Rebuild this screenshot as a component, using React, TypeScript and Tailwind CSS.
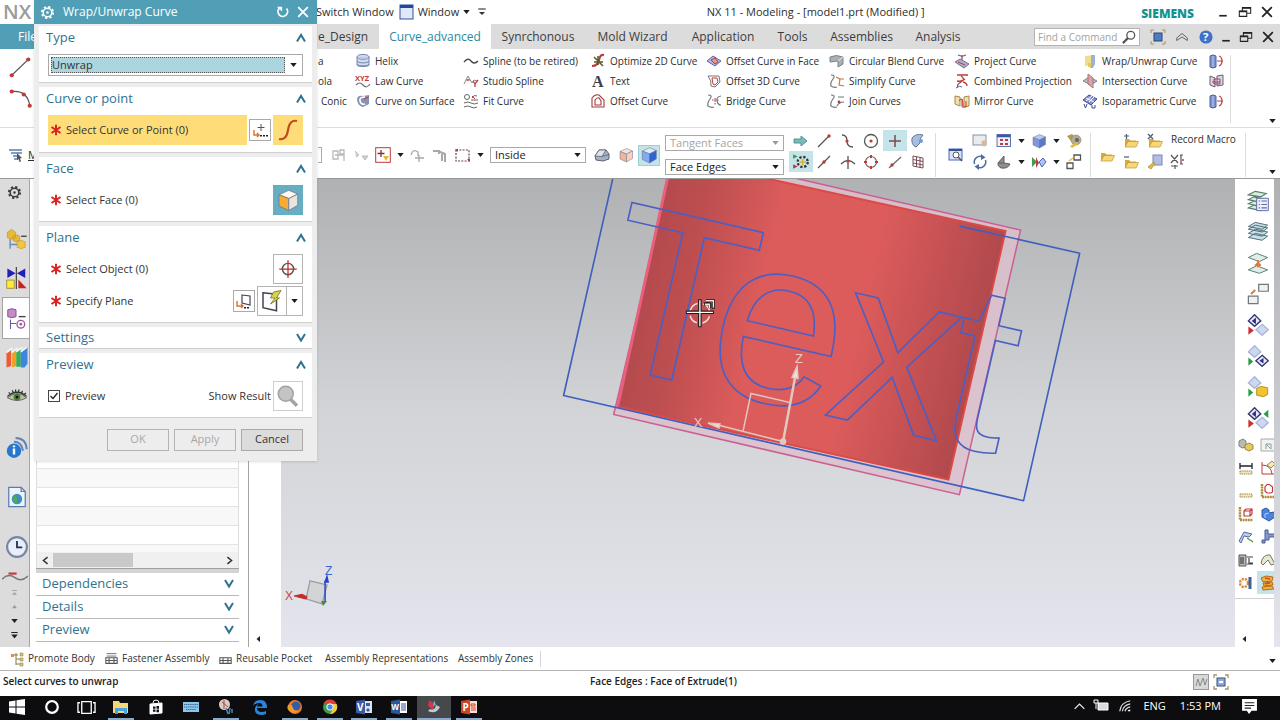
import type { ReactNode } from "react";

type IconProps = { s?: number; children: ReactNode };
const Svg = ({ s = 16, children }: IconProps) => (
  <svg viewBox="0 0 16 16" width={s} height={s} fill="none" aria-hidden="true" className="shrink-0">
    {children}
  </svg>
);

const BLUE = "#4468c0";
const RED = "#c03a3a";
const GREY = "#667079";
const GOLD = "#e8b838";

const Folder = ({ mark }: { mark?: string }) => (
  <Svg>
    <path d="M2 14V6h4l1.500 1.500H13V14z" fill="#d9a93a" />
    <path d="M2 14l3-5.500h10.500L13 14z" fill="#f7d777" stroke="#c29532" strokeWidth=".7" />
    {mark && <path d={mark} stroke="#4a5a78" strokeWidth="1.200" />}
  </Svg>
);
const Cube = ({ l, r, t, s = 16 }: { l: string; r: string; t: string; s?: number }) => (
  <Svg s={s}>
    <path d="M2 4.500l6.500-3 6 2.500-6 3z" fill={t} stroke="#6b7388" strokeWidth=".5" />
    <path d="M2 4.500L8.500 7v8L2 12z" fill={l} stroke="#6b7388" strokeWidth=".5" />
    <path d="M14.500 4L8.500 7v8l6-3.500z" fill={r} stroke="#6b7388" strokeWidth=".5" />
  </Svg>
);
const Caret = ({ faded }: { faded?: boolean }) => (
  <svg viewBox="0 0 8 5" width="7" height="4" aria-hidden="true" className="shrink-0">
    <path d="M0 0h8L4 5z" fill={faded ? "#9a9a9a" : "#1d1d1d"} />
  </svg>
);
const Chevron = ({ down, s = 12 }: { down?: boolean; s?: number }) => (
  <svg viewBox="0 0 12 10" width={s} height={s - 2} fill="none" aria-hidden="true" className="shrink-0">
    <path d={down ? "M2 1l4 6.500L10 1" : "M2 8.500L6 2l4 6.500"} stroke="#2f7290" strokeWidth="2" />
  </svg>
);
const Gear = ({ color, s = 16 }: { color: string; s?: number }) => (
  <Svg s={s}>
    <circle cx="8" cy="8" r="6" stroke={color} strokeWidth="2" strokeDasharray="2.400 2.310" />
    <circle cx="8" cy="8" r="4.600" stroke={color} strokeWidth="1.600" />
    <circle cx="8" cy="8" r="1.300" fill={color} />
  </Svg>
);
const Restore = () => (
  <Svg s={14}>
    <path d="M1.500 7h8.500v6h-8.500zM5 6.500V3h9.500v6.500h-4" stroke="#222" strokeWidth="1.200" />
    <path d="M1.500 7.500h8.500M5 3.500h9.500" stroke="#222" strokeWidth="1.600" />
  </Svg>
);
const Minimize = () => (
  <Svg s={12}>
    <path d="M3 13h10" stroke="#222" strokeWidth="2.200" />
  </Svg>
);
const Close = ({ color = "#222", s = 14 }: { color?: string; s?: number }) => (
  <Svg s={s}>
    <path d="M2.500 2.500l11 11M13.500 2.500l-11 11" stroke={color} strokeWidth="2" />
  </Svg>
);
const Tabletool = ({ tall }: { tall?: boolean }) => (
  <Svg s={13}>
    {tall && <path d="M2 2h12M2 5h12" stroke="#555" />}
    <path d="M1 7h14v7H1zM5 7v7M11 7v7M1 10.500h14" stroke="#555" strokeWidth="1.300" />
  </Svg>
);

const ic = {
  menu: <Svg><path d="M1 3h13M3 6h11M5 9h6M6 12h4" stroke="#5c7fae" strokeWidth="1.600" /><path d="M9 6l5 5-2 .5 1 3-1.500.5-1-3-1.500 1z" fill="#555" /></Svg>,
  helix: <Svg><ellipse cx="8" cy="4" rx="6" ry="2.600" fill="#cfd9ee" stroke="#7186b4" /><path d="M2 4v8c0 2 12 2 12 0V4M2 8c1 2.500 11 2.500 12 0M2 11c1 2.500 11 2.500 12 0" stroke="#7186b4" fill="#a9b8dc" fillOpacity=".5" /></Svg>,
  law: <Svg><text x="0" y="7.500" fontSize="7.500" fontWeight="700" fill={RED} fontFamily="Open Sans, sans-serif">XYZ</text><path d="M1 12q3.500-4 7 0t7-1" stroke={GREY} strokeWidth="1.200" /></Svg>,
  onSurf: <Svg><path d="M2 7q0-5 6-4l6-1v9l-6 3q-5-1-6-7z" fill="#8593b5" /><path d="M10 4q-6 0-5 4t5 3" stroke="#fff" strokeWidth="1.600" /><path d="M9 6l5-2" stroke={RED} /></Svg>,
  spline: <Svg><path d="M1 9q4-5 7-1t7 0" stroke="#444" strokeWidth="1.300" /></Svg>,
  studio: <Svg><path d="M1 11L5 3l4 7 2-3 3 1" stroke="#888" /><path d="M3.500 7h3M10 8l2 3 3-4M12 11v3" stroke={RED} strokeWidth="1.300" /></Svg>,
  fit: <Svg><circle cx="4" cy="4" r="2.500" stroke="#666" /><path d="M9 5q2-4 5-2M8 7h7M1 10q4-2 7 0t7 0M1 14q4-2 7 0t6 0" stroke="#666" /><path d="M9 3l3 3" stroke={RED} /></Svg>,
  optimize: <Svg><path d="M2 13q6 0 7-6t5-5" stroke={RED} strokeWidth="2.200" /><path d="M4 4l9 9M8 3v9M4 9h9" stroke="#5c5930" strokeWidth="1.500" /></Svg>,
  text: <Svg><text x="2" y="14" fontSize="16" fontWeight="700" fill="#3c4048" fontFamily="Liberation Serif, serif">A</text></Svg>,
  offset: <Svg><path d="M2 14V5q3-4 7-3l5 5v7zM5 12V7q2-3 4-2l2 3v4z" stroke="#a33b3b" strokeWidth="1.100" /></Svg>,
  offFace: <Svg><path d="M1 8l6-5 8 5-6 5z" fill="#b3b6e0" stroke="#6165a8" /><path d="M5 7l4-2 3 4-3 2z" fill="#e39a8c" stroke={RED} /></Svg>,
  off3d: <Svg><path d="M2 3h11l1 6-5 5-4-1q1-5-3-10z" stroke="#777" /><path d="M6 5h5l1 4-3 3-2-1z" stroke={RED} /></Svg>,
  bridge: <Svg><path d="M2 2q5 0 2 4T2 13q3 2 6 1M15 3q-5 1-4 5t4 4" stroke="#6c7a78" strokeWidth="1.200" /><path d="M6 7h7M9 5v7" stroke={RED} strokeDasharray="1.500 1" /></Svg>,
  blend: <Svg><path d="M1 4q6-3 13 0v7l-5 3V8L1 9z" fill="#a9b0b2" stroke="#7b8488" /><path d="M9 8l5-4" stroke="#e8ecec" /></Svg>,
  simplify: <Svg><path d="M2 2q5 0 2 4T2 13q3 2 6 1" stroke="#6c7a78" strokeWidth="1.200" /><path d="M7 4l4 2-1 6 5 1M10 6h5" stroke="#c5793d" strokeWidth="1.200" /></Svg>,
  join: <Svg><path d="M2 2q5 0 2 4T2 13q3 2 6 1M9 4h6M8 13q2-4 7-4" stroke="#6c7a78" strokeWidth="1.200" /><circle cx="10" cy="9" r="1.400" fill={RED} /></Svg>,
  project: <Svg><path d="M4 2q4 2 8 0" stroke={BLUE} strokeWidth="1.300" /><path d="M8 3v7" stroke={RED} strokeWidth="1.300" /><path d="M1 9l5-3 9 5-5 4z" fill="#a9aecb" stroke="#7076a3" /><path d="M4 9l7 3" stroke={RED} /></Svg>,
  combined: <Svg><path d="M3 2h11M7 3q5 3 0 6t-3 5M11 6q-3 3-8 2M9 9q4 1 4 4" stroke={RED} strokeWidth="1.300" /><path d="M2 15q4-3 6-1" stroke={BLUE} /></Svg>,
  mirror: <Svg><path d="M1 3l5 1v9l-5-2zM10 4l5-1v10l-5 1z" fill="#efdfb6" stroke="#a98944" /><path d="M5 8q4-6 4 5M8 6v8h4V8" stroke={RED} /></Svg>,
  wrap: <Svg><path d="M3 3l9-1v10l-9 1z" fill="#f0de8c" /><path d="M9 2h4v9l-2 4H8l1-4z" fill="#9fb1d0" /><path d="M6 10h3v4H6z" fill="#e6c957" /></Svg>,
  intersect: <Svg><path d="M1 8l6-4 8 4-6 4z" fill="#b9bcc6" stroke="#80838f" /><path d="M6 1l5 4v10l-5-4z" fill="#d8a3a3" fillOpacity=".8" stroke="#b07070" /></Svg>,
  iso: <Svg><path d="M1 7l6-5 8 4-6 6z" fill="#8793d0" stroke="#3b4a9a" /><path d="M4 5l8 4M7 9l5-5M4 8l6-5" stroke="#fff" /><path d="M2 11l1.500 4L5 11M10 12v3h3v-3" stroke="#3b4a9a" /></Svg>,
  extract: <Svg><path d="M2 3q3-2 6 0v11q-3 2-6 0z" fill="#7d94cf" stroke="#4d62a3" /><path d="M5 3v11" stroke="#b8c6ee" /><path d="M9 8h6M11 3q3 1 3 5t-3 5" stroke={RED} strokeWidth="1.200" /></Svg>,
  section: <Svg><path d="M2 3l5 2v9l-5-2zM9 3l6-1v10l-6 1z" fill="#dcd7e0" stroke="#666" /><path d="M4 9h8M6 6h6v5H6z" stroke="#a3407a" /></Svg>,
  ghostA: <Svg><path d="M2 4h5v8H2zM9 3h4v4H9zM4 8h9v6" stroke="#b9b9b9" strokeWidth="1.300" /></Svg>,
  ghostB: <Svg><path d="M2 4l4 4-3 2M9 9h6l-3 4z" stroke="#bdbdbd" fill="#cfcfcf" /></Svg>,
  filter: <Svg><rect x=".7" y=".7" width="14.600" height="14.600" stroke={RED} /><path d="M6 3v7M2.500 6.500h7" stroke="#7b3434" strokeWidth="1.300" /><path d="M8 9h6l-3 5z" fill={GOLD} /></Svg>,
  ghostC: <Svg><path d="M2 8q2-7 7-3v4M6 11h9M10 8v7" stroke="#a8a8a8" strokeWidth="1.300" /></Svg>,
  ghostD: <Svg><path d="M1 4h6v3M6 4l7 3v8M10 7v7" stroke="#a8a8a8" strokeWidth="2" /></Svg>,
  marquee: <Svg><rect x="1" y="3" width="13" height="11" stroke="#6b4444" strokeWidth="1.200" strokeDasharray="2 1.300" /><path d="M0 2h3v3M12 12h3v3" fill={RED} /></Svg>,
  shell: <Svg><path d="M1 9l4-6h7l3 4v5l-6 2-7-1z" fill="#a8b1c2" stroke="#5c6372" /><path d="M1 9l4-6h7l-4 6.500z" fill="#dfe3ea" stroke="#5c6372" strokeWidth=".8" /><path d="M8 9.500l7-2" stroke="#5c6372" strokeWidth=".8" /></Svg>,
  cubeOrange: <Cube t="#f3e3dc" l="#efb49c" r="#f8d0bb" />,
  cubeBlue: <Cube t="#dfeaff" l="#7facf0" r="#2f64cf" s={18} />,
  arrowR: <Svg><path d="M1 6h7V3l6 5-6 5v-3H1z" fill="#75bdbb" stroke="#5a8f96" /></Svg>,
  lineEnd: <Svg><path d="M2 14L13 3" stroke="#555" strokeWidth="1.200" /><circle cx="13" cy="3" r="1.700" fill={RED} /></Svg>,
  lineMid: <Svg><path d="M2 14L14 2" stroke="#555" strokeWidth="1.200" /><circle cx="8" cy="8" r="1.700" fill={RED} /></Svg>,
  curveS: <Svg><path d="M2 2q5 0 5 6t6 6" stroke="#555" strokeWidth="1.300" /><circle cx="7" cy="8" r="1.600" fill={RED} /></Svg>,
  centre: <Svg><circle cx="8" cy="8" r="6.500" stroke="#555" strokeWidth="1.300" /><circle cx="8" cy="8" r="1.600" fill={RED} /></Svg>,
  plus: <Svg><path d="M8 2v12M2 8h12" stroke="#7c4a4a" strokeWidth="1.500" /></Svg>,
  face: <Svg><path d="M2 5q4-5 11-3-4 4-3 8l-4 4q-5-2-4-9z" fill="#a8bddf" stroke="#65799d" /><circle cx="11" cy="8" r="2" fill="#7a98d0" /></Svg>,
  snap: <Svg s={18}><path d="M1 1l4 2-4 2z" fill="#3b9c56" /><path d="M1 10l4 2-4 2z" fill={RED} /><circle cx="9.500" cy="8" r="4.500" stroke="#333" strokeWidth="2" strokeDasharray="2 1.530" /><path d="M9.500 5v6M6.500 8h6" stroke="#d5b52d" strokeWidth="1.500" /></Svg>,
  cross: <Svg><path d="M8 2v13M1 10q7-7 14 0" stroke="#555" strokeWidth="1.300" /><circle cx="8" cy="7" r="1.500" fill={RED} /></Svg>,
  quad: <Svg><circle cx="8" cy="8" r="5.500" stroke="#775555" strokeWidth="1.200" /><path d="M7 1h2v3H7zM7 12h2v3H7zM1 7h3v2H1zM12 7h3v2h-3z" fill={RED} /></Svg>,
  tang: <Svg><path d="M2 14L14 3" stroke="#666" strokeWidth="1.200" /><circle cx="5" cy="11" r="1.700" fill={RED} /></Svg>,
  grid: <Svg><path d="M3 2l10 2v10L3 12zM6.500 3v10M10 4v10M3 5.500l10 2M3 9l10 2" stroke="#7a4d57" /></Svg>,
  fitView: <Svg><rect x="1" y="2" width="13" height="11" fill="#d8e3f5" stroke={BLUE} /><path d="M1 3h13" stroke="#39518f" strokeWidth="2" /><circle cx="8" cy="8" r="3" fill="#fff" stroke="#555" /><path d="M10 10l4 4" stroke="#555" strokeWidth="1.500" /></Svg>,
  pan: <Svg><rect x="1" y="2" width="13" height="10" fill="#e8ebf0" stroke="#8991a0" /><path d="M9 9l3-2 3 3-3 4z" fill="#e0b58f" /></Svg>,
  layout: <Svg><rect x="1" y="1.500" width="13.500" height="12" fill="#f0f2fb" stroke="#6074ae" /><path d="M1 3h13" stroke="#3d55a5" strokeWidth="2.500" /><path d="M4 6h3v2H4zM9 6h3v2H9zM4 10h3v2H4zM9 10h3v2H9z" fill={RED} /></Svg>,
  shaded: <Cube t="#b7c8f2" l="#7f98dc" r="#5c78c6" />,
  palette: <Svg><path d="M1 3l5-2 3 3-4 4z" fill="#b79a48" /><circle cx="10" cy="7" r="5" fill="#b3aa8c" stroke="#8d8468" strokeWidth=".6" /><path d="M4 13l7-4 1 2-6 4z" fill={GOLD} /><circle cx="11" cy="7" r="2" fill="#56628a" /></Svg>,
  rotate: <Svg><path d="M2.600 10A5.800 5.800 0 0 1 11 3.100M13.400 6A5.800 5.800 0 0 1 5 12.900" stroke="#536ca0" strokeWidth="1.500" /><path d="M9 0l4.500 3.500L9 6zM7 10l-4.500 2.500L7 16z" fill="#536ca0" /></Svg>,
  disc: <Svg><path d="M2 9l6-7v7l6 1q-2 5-9 4-4-2-3-5z" fill="#8b8f92" stroke="#5d6063" /><path d="M8 9H2.500" stroke="#5d6063" /></Svg>,
  clip: <Svg><path d="M1 3l5 5-5 5z" fill="#3e9d55" /><path d="M5 3l3 6-3 5z" fill={RED} /><path d="M8 8l4-4 3 4-4 5z" fill="#b2c2ea" stroke={BLUE} /></Svg>,
  squares: <Svg><path d="M8 1h6.500v5H8zM1 9h6v5.500H1z" stroke="#555" strokeWidth="1.300" /><path d="M3 7l4-3" stroke={GOLD} strokeWidth="1.500" /></Svg>,
  edit: <Svg><rect x="6" y="1" width="9" height="10" fill="#b2bfe2" stroke="#7886b4" /><path d="M1 13l6-5 1 2-4 5z" fill={GOLD} stroke="#9a8036" strokeWidth=".6" /></Svg>,
  xvar: <Svg><path d="M2 1l7 8M9 1L2 9M12 1v9M11 1h3M11 10h3M2 12h7M6 11v4" stroke="#555" strokeWidth="1.200" /><circle cx="14" cy="6" r="1" fill={RED} /></Svg>,
  tree: <Svg s={22}><path d="M1 3l3-2 3 2v4l-3 1-3-1zM5 6l3-1 2 1v3l-3 1-2-1z" fill={GOLD} stroke="#b98b1d" strokeWidth=".4" /><path d="M3 8v7M3 12h5" stroke="#6c88b4" /><path d="M11 6h4" stroke="#444" /><path d="M8 10l3-1 3 1v4l-3 1-3-1z" fill="#f2c63e" stroke="#b98b1d" strokeWidth=".4" /></Svg>,
  flip: <Svg s={22}><path d="M1 1l6 3.500L1 8zM14 1L8 4.500 14 8z" fill="#2220b8" /><path d="M7.500 0v16" stroke="#333" strokeWidth=".8" /><path d="M.5 9.500h5.500v6H.5z" fill="#ffe93f" stroke="#8f8630" strokeWidth=".6" /><path d="M9 9l6 6.500H9z" fill="#c62424" /></Svg>,
  nav: <Svg s={22}><path d="M2 2q3-1.500 6 0v5q-3 1.500-6 0z" fill="#c48bc7" stroke="#8b4f93" strokeWidth=".7" /><path d="M10 7h5" stroke="#444" /><path d="M4 9v7M4 12h4" stroke="#71599c" strokeWidth=".8" /><circle cx="11.500" cy="12.500" r="2.800" stroke="#a05aa0" /><circle cx="11.500" cy="12.500" r="1" fill="#a05aa0" /></Svg>,
  books: <Svg s={24}><path d="M1 5l3-2v11l-3 1z" fill="#ee5a34" /><path d="M4.500 5l3-2v11l-3 1z" fill="#f0a12c" /><path d="M7.500 4.500l3-2v12h-3z" fill="#37ae54" /><path d="M10.500 4.500l4.500-3v11l-2 2.500h-2.500z" fill="#3d86e0" /><path d="M1 5l4-3M4.500 5l4-3M7.500 4.500l4-3M10.500 4.500l4-3" stroke="#f2f4f8" strokeWidth="1.100" /></Svg>,
  eye: <Svg s={22}><path d="M1 10q7-6 14 0-7 4-14 0z" fill="#b8c4a4" stroke="#555" strokeWidth=".6" /><circle cx="8" cy="9.500" r="2.500" fill="#4c7a36" /><circle cx="8" cy="9.500" r="1" fill="#111" /><path d="M1 9q7-6 14 0M2 6l1.500 2M4.500 4.500l1 2M7 4v2M9.500 4l-.5 2M12 5l-1 2M14.500 6.500L13 8" stroke="#333" strokeWidth=".9" /></Svg>,
  info: <Svg s={24}><circle cx="6" cy="10.500" r="4.800" fill="#2478cf" /><path d="M6 9v4M6 7v1.200" stroke="#fff" strokeWidth="1.600" /><path d="M6 4.500q5 0 6 6M7 2q7 0 7.500 7.500" stroke="#5d84b9" strokeWidth="1.300" /></Svg>,
  web: <Svg s={22}><path d="M2 1h9l3 3v11H2z" fill="#eef4fd" stroke="#5b7cae" strokeWidth=".9" /><path d="M11 1v3h3" stroke="#5b7cae" strokeWidth=".9" /><circle cx="8" cy="9.500" r="3.800" fill="#3f8fc0" /><path d="M6 7q3 1 2 3t2 3q-4 0-5-3z" fill="#4fad4e" /></Svg>,
  clock: <Svg s={24}><circle cx="8" cy="8" r="6.600" fill="#e8eefa" stroke="#7886a3" strokeWidth="1.400" /><path d="M8 4v4.200h3.500" stroke="#25304e" strokeWidth="1.200" /></Svg>,
  wave: <Svg s={26}><path d="M0 10q4-4 8-1t8-1" stroke="#777" strokeWidth=".9" /><path d="M4 6.500h5" stroke={RED} strokeWidth="1.300" /></Svg>,
  promote: <Svg><path d="M3 4h5M6 2v12M6 8h4M6 13h4" stroke="#8a7a4a" /><path d="M1 3h3v3H1z" fill="#e08a5a" /><path d="M10 2h3v3h-3zM10 7h3v3h-3zM10 12h3v3h-3z" fill="#d8c27a" stroke="#8a7a4a" strokeWidth=".5" /></Svg>,
  layerA: <Svg s={22}><path d="M1 13l4-2 9 2-4 2zM1 10l4-2 9 2-4 2zM1 7l4-2 9 2-4 2zM1 3.500L6 1l8 1.500L10 5z" fill="#d9eadc" stroke="#527d68" strokeWidth=".8" /><path d="M7 6h8.500v9H7z" fill="#eef0fb" stroke="#5f69aa" strokeWidth=".7" /><path d="M8.500 8h1M10.500 8h4M8.500 10.500h1M10.500 10.500h4M8.500 13h1M10.500 13h4" stroke="#5f69aa" strokeWidth=".8" /></Svg>,
  layerB: <Svg s={22}><path d="M1 12l5-3 9 2-4 3zM1 9l5-3 9 2-4 3zM1 6l5-3 9 2-4 3zM1 4l5-3 9 2-4 3z" fill="#c9e0e6" stroke="#4b6a78" strokeWidth=".7" /></Svg>,
  layerC: <Svg s={22}><path d="M1 4l6-3 8 3-6 3zM1 13l6-3 8 3-6 2.500z" fill="#e1eee8" stroke="#5b7b6e" strokeWidth=".7" /><path d="M8 6v5M6 10l2-2 2 2" stroke="#e0783e" strokeWidth="1.500" /></Svg>,
  layerD: <Svg s={22}><path d="M8.500 1h7v5h-7zM1 9.500h7v5.500H1z" fill="#eef2f2" stroke="#70797c" strokeWidth=".9" /><path d="M3 8l3-3" stroke="#e0783e" strokeWidth="1.500" /></Svg>,
};

const Diamonds = ({ flip, gold, both }: { flip?: boolean; gold?: boolean; both?: boolean }) => (
  <Svg s={22}>
    <path d="M5.500 0.500L10 5l-4.500 4L1 5z" fill={flip || gold ? "#ccd8f2" : "#e7e9f8"} stroke={flip || gold ? "#a9b7da" : "#33366e"} />
    {!flip && !gold && <path d="M6.500 2.500v5L3.500 5z" fill="#2c2f86" />}
    <path d={flip || gold ? "M1 9l3.500 3L1 15z" : "M1 9l4 3-4 3z"} fill={flip || gold ? "#2a9b47" : "#cc3131"} />
    {gold ? (
      <path d="M7 9l3-1.500 5 1v5L12 15l-5-1z" fill="#f0c430" stroke="#a8861c" strokeWidth=".6" />
    ) : (
      <path d="M11 7.500l4.500 4-4.500 4-4.500-4z" fill={flip ? "#e7e9f8" : "#ccd8f2"} stroke={flip ? "#33366e" : "#a9b7da"} />
    )}
    {flip && <path d="M12 9.500v4l-3-2z" fill="#2c2f86" />}
    {both && <path d="M15.500 2v6L12 5z" fill="#2a9b47" />}
  </Svg>
);

const Ruler = ({ d, c = RED }: { d: string; c?: string }) => (
  <Svg>
    <path d="M2 11h12v3H2z" fill="#f5e8b8" stroke="#9c8a4d" strokeDasharray="1.500 .7" />
    <path d={d} stroke={c} strokeWidth="1.300" />
  </Svg>
);

const sideGrid: { name: string; icon: ReactNode; on?: boolean }[] = [
  { name: "Bodies", icon: <Svg><path d="M1 4l4-2 3 2v6l-4 1-3-2z" fill="#b9bbb3" stroke="#81837c" /><path d="M7 8l4-2 4 2v4l-4 2-4-2z" fill="#e4ca63" stroke="#a2893b" /></Svg> },
  { name: "Sheet", icon: <Svg><path d="M1 2h14v12H1z" fill="#f1f3f1" stroke="#a3aca6" /><path d="M6 12V7h5v5M6 7l5 5" stroke="#8ba092" /></Svg> },
  { name: "Measure Distance", icon: <Ruler d="M2 3v6M14 3v6M2 6h12" c="#223" /> },
  { name: "Measure Angle", icon: <Svg><path d="M2 2v12h13M2 5q9 0 10 9" stroke={RED} /><path d="M7 5l5-4 3 3-4 4z" fill="#f5e8b8" stroke="#9c8a4d" /></Svg> },
  { name: "Ruler", icon: <Ruler d="M0 0" /> },
  { name: "Measure Radius", icon: <Svg><path d="M2 1v13h13" stroke="#b08a3a" strokeWidth="2.500" strokeDasharray="2 .6" /><path d="M12.500 9V4l-3-2.500H7L5 4v4l2 2h4z" stroke={RED} strokeWidth="1.200" /></Svg> },
  { name: "Measure Body", icon: <Svg><path d="M2 1v13h13" stroke="#b08a3a" strokeWidth="2.500" strokeDasharray="2 .6" /><path d="M6 5h6v5H6zM8 3h6v5M6 5l2-2M12 5l2-2M12 10l2-2" stroke={RED} strokeWidth="1.200" /></Svg> },
  { name: "Block", icon: <Svg><path d="M2 4l4-2 3 2v3l5-1 1 5-6 4-7-4z" fill="#4d83dd" stroke="#2d56a6" /><path d="M9 7l-4 1v4" stroke="#b3cdf6" /></Svg> },
  { name: "Draft", icon: <Svg><path d="M1 12L6 3l8 2-3 3-5-1-3 7z" fill="#bccbec" stroke="#5768a5" /><path d="M9 9l6 4" stroke="#4f9a50" strokeWidth="1.500" /></Svg> },
  { name: "Joint", icon: <Svg><path d="M5 1h3v4h7v3H9v3H5v3H2v-3h3z" fill="#8498cf" stroke="#4c5c92" /></Svg> },
  { name: "Caliper", icon: <Svg><path d="M1 3h7v11H1z" fill="#b6b8ba" stroke="#555" /><path d="M3 5v7M5 5v7M9 5h6M9 12h6M11 6v5h4" stroke="#444" strokeWidth="1.200" /></Svg> },
  { name: "Protractor", icon: <Svg><path d="M1 11q2-9 9-8l5 9-4 1-3-5-5 5z" fill="#e6e9d2" stroke="#73785a" /></Svg> },
  { name: "Gear", icon: <Svg><circle cx="6" cy="8" r="4" stroke="#e08a3c" strokeWidth="2.500" strokeDasharray="2.200 1" /><path d="M12 2v12" stroke="#3c5f9e" strokeWidth="3" /></Svg> },
  { name: "Assembly", on: true, icon: <Svg><path d="M1 3l5-2 7 1-1 4-9 1zM3 8l9-1 1 3-9 1zM2 12l10-1 2 3-11 1z" fill="#edb43b" stroke="#b96a1e" /><path d="M5 3l5 1M5 9l5-1" stroke="#d24a28" strokeWidth="1.500" /></Svg> },
];

const ribbon: { width: string; items: [string, ReactNode][] }[] = [
  { width: "w-[108px]", items: [["Helix", ic.helix], ["Law Curve", ic.law], ["Curve on Surface", ic.onSurf]] },
  { width: "w-[127px]", items: [["Spline (to be retired)", ic.spline], ["Studio Spline", ic.studio], ["Fit Curve", ic.fit]] },
  { width: "w-[116px]", items: [["Optimize 2D Curve", ic.optimize], ["Text", ic.text], ["Offset Curve", ic.offset]] },
  { width: "w-[123px]", items: [["Offset Curve in Face", ic.offFace], ["Offset 3D Curve", ic.off3d], ["Bridge Curve", ic.bridge]] },
  { width: "w-[125px]", items: [["Circular Blend Curve", ic.blend], ["Simplify Curve", ic.simplify], ["Join Curves", ic.join]] },
  { width: "w-[128px]", items: [["Project Curve", ic.project], ["Combined Projection", ic.combined], ["Mirror Curve", ic.mirror]] },
  { width: "w-[126px]", items: [["Wrap/Unwrap Curve", ic.wrap], ["Intersection Curve", ic.intersect], ["Isoparametric Curve", ic.iso]] },
];

const tabs: [string, string][] = [
  ["Curve_advanced", "w-[112px]"],
  ["Synrchonous", "w-[94px]"],
  ["Mold Wizard", "w-[95px]"],
  ["Application", "w-[86px]"],
  ["Tools", "w-[53px]"],
  ["Assemblies", "w-[85px]"],
  ["Analysis", "w-[68px]"],
];

const Btn = ({ name, on, className = "", children }: { name: string; on?: boolean; className?: string; children: ReactNode }) => (
  <button type="button" aria-label={name} className={`flex shrink-0 items-center justify-center ${on ? "bg-[#c5e4ea]" : ""} ${className}`}>
    {children}
  </button>
);

const Combo = ({ label, value, disabled, className }: { label: string; value: string; disabled?: boolean; className: string }) => (
  <div className={`flex h-4 shrink-0 items-center border border-[#a9a9a9] bg-white pr-1 ${className}`}>
    <select aria-label={label} disabled={disabled} className="h-full min-w-0 flex-1 appearance-none bg-transparent pl-1 text-[11px] leading-[14px] text-[#222] disabled:text-[#a5a5a5] disabled:opacity-100">
      <option>{value}</option>
    </select>
    <Caret faded={disabled} />
  </div>
);

const Divider = () => <div className="my-1 w-px shrink-0 self-stretch bg-[#dcdcdc]" />;

function TitleBar() {
  return (
    <header className="flex h-6 items-center bg-white">
      <div className="w-[316px] shrink-0 pl-[3px] text-[20px] leading-none font-semibold text-[#9b9b9b]">NX</div>
      <div className="flex shrink-0 items-center gap-1 text-[11px]">
        <button type="button">Switch Window</button>
        <Svg><rect x="2" y="1" width="13" height="14" fill="#dfe8fb" stroke="#30509c" /><path d="M2 2.500h13" stroke="#2447a0" strokeWidth="3" /></Svg>
        <button type="button" className="flex items-center gap-1">Window <Caret /></button>
        <Btn name="More" className="w-4">
          <Svg s={12}><path d="M3 4h10" stroke="#333" strokeWidth="1.500" /><path d="M4 8h8l-4 4z" fill="#333" /></Svg>
        </Btn>
      </div>
      <h1 className="flex-1 text-center text-[11px]">NX 11 - Modeling - [model1.prt (Modified) ]</h1>
      <div className="flex shrink-0 items-center pr-0.5">
        <span className="mr-[18px] pt-1 text-[12px] font-extrabold text-[#12938f]">SIEMENS</span>
        <Btn name="Minimize window" className="w-[22px]"><Minimize /></Btn>
        <Btn name="Restore window" className="w-[22px]"><Restore /></Btn>
        <Btn name="Close window" className="w-[22px]"><Close /></Btn>
      </div>
    </header>
  );
}

function TabBar() {
  return (
    <nav className="flex h-[25px] items-stretch bg-[#dcdcdc] text-[12px] text-[#3c3c3c]">
      <div className="w-[318px] shrink-0">
        <button type="button" className="h-full bg-[#519fb7] pr-3 pl-[18px] text-white">File</button>
      </div>
      <button type="button" className="w-[61px] shrink-0 text-left">e_Design</button>
      {tabs.map(([name, width], i) => (
        <button key={name} type="button" className={`${width} shrink-0 text-center ${i === 0 ? "bg-white text-[#2b8aa0]" : ""}`}>
          {name}
        </button>
      ))}
      <div className="ml-auto flex shrink-0 items-center pr-0.5">
        <label className="mr-1.5 flex h-[18px] w-[106px] items-center border border-[#b4b4b4] bg-white px-[3px]">
          <input aria-label="Find a Command" placeholder="Find a Command" className="w-0 flex-1 text-[10px] leading-4 outline-none placeholder:text-[#a2a2a2]" />
          <Svg s={14}><circle cx="10" cy="6" r="4.500" stroke="#555" strokeWidth="1.500" /><path d="M7 9l-6 6" stroke="#555" strokeWidth="2.500" /></Svg>
        </label>
        <Btn name="Full Screen" className="w-6">
          <Svg><path d="M1 4V1h3M12 1h3v3M15 12v3h-3M4 15H1v-3" stroke="#a98f60" /><rect x="4" y="4" width="8" height="8" fill="#4c7cc4" stroke="#2b4470" /></Svg>
        </Btn>
        <Btn name="Collapse ribbon" className="w-6">
          <Svg s={14}><path d="M2 9l6-5 6 5v3L8 8l-6 4z" stroke="#555" /></Svg>
        </Btn>
        <Btn name="Help" className="w-6">
          <Svg s={14}><circle cx="8" cy="8" r="7.500" fill="#3d72c8" /><text x="4.500" y="12.500" fontSize="13" fontWeight="700" fill="#fff" fontFamily="Open Sans, sans-serif">?</text></Svg>
        </Btn>
        <Btn name="Minimize part" className="w-4"><Minimize /></Btn>
        <Btn name="Restore part" className="w-6"><Restore /></Btn>
        <Btn name="Close part" className="w-5"><Close /></Btn>
      </div>
    </nav>
  );
}

function Ribbon() {
  return (
    <section className="flex h-[79px] items-start border-b border-[#dedede] bg-white pt-0.5 text-[10px]">
      <div className="flex w-[318px] shrink-0 flex-col gap-2 pt-1 pl-2">
        <Svg s={24}><path d="M2.500 13.500L13.500 3" stroke="#555" strokeWidth=".7" /><circle cx="2.500" cy="13.500" r="1.400" fill={RED} /><circle cx="13.500" cy="3" r="1.400" fill={RED} /></Svg>
        <Svg s={24}><path d="M2.500 3Q13 2 14.500 12.500" stroke="#555" strokeWidth=".8" /><circle cx="2.500" cy="3" r="1.400" fill={RED} /><circle cx="10.500" cy="5" r="1.400" fill={RED} /><circle cx="14.500" cy="12.500" r="1.400" fill={RED} /></Svg>
      </div>
      <div className="w-[37px] shrink-0 leading-5">
        <div>a</div>
        <div>ola</div>
        <div className="pl-[3px]">Conic</div>
      </div>
      {ribbon.map((col) => (
        <div key={col.width} className={`${col.width} shrink-0`}>
          {col.items.map(([name, icon]) => (
            <button key={name} type="button" className="flex h-5 items-center gap-1 whitespace-nowrap">
              {icon}
              {name}
            </button>
          ))}
        </div>
      ))}
      <div className="w-[22px] shrink-0">
        <Btn name="Extract Virtual Curve" className="h-5">{ic.extract}</Btn>
        <Btn name="Section Curve" className="h-5">{ic.section}</Btn>
        <Btn name="Silhouette Curve" className="h-5">{ic.extract}</Btn>
      </div>
      <Divider />
      <div className="mt-auto ml-auto pr-1 pb-1"><Caret /></div>
    </section>
  );
}

function SelectionBar() {
  return (
    <section className="flex h-[51px] items-center border-b border-[#999] bg-white pt-1 text-[11px]">
      <div className="flex w-[318px] shrink-0 items-center gap-1 pl-2">{ic.menu}<span><span className="underline">M</span>enu</span></div>
      <div className="mr-1.5 h-4 w-1 shrink-0 border border-l-0 border-[#a9a9a9]" />
      <Btn name="Reset filters" className="w-[22px]">{ic.ghostA}</Btn>
      <Btn name="Filter by detail" className="w-[22px]">{ic.ghostB}</Btn>
      <Btn name="Type filter" className="w-[22px]">{ic.filter}</Btn>
      <Btn name="Type filter options" className="w-3"><Caret /></Btn>
      <Btn name="Undo pick" className="w-[22px]">{ic.ghostC}</Btn>
      <Btn name="Up one level" className="w-6">{ic.ghostD}</Btn>
      <Btn name="Rectangle select" className="w-[22px]">{ic.marquee}</Btn>
      <Btn name="Rectangle select options" className="mr-1 w-3"><Caret /></Btn>
      <Combo label="Selection scope" value="Inside" className="w-24" />
      <Btn name="Shell" className="ml-1 w-6">{ic.shell}</Btn>
      <Btn name="Hidden faces" className="w-6">{ic.cubeOrange}</Btn>
      <Btn name="Solid" on className="h-[21px] w-[22px] border border-[#9ccfd8]">{ic.cubeBlue}</Btn>
      <div className="mx-[5px] flex w-[119px] shrink-0 flex-col gap-2">
        <Combo label="Face rule" value="Tangent Faces" disabled className="w-full" />
        <Combo label="Curve rule" value="Face Edges" className="w-full" />
      </div>
      <div className="mb-2 grid w-[141px] shrink-0 grid-cols-6">
        {[
          ["Next", ic.arrowR], ["End Point", ic.lineEnd], ["Control Point", ic.curveS], ["Arc Center", ic.centre], ["Existing Point", ic.plus], ["Point on Face", ic.face],
          ["Snap Point", ic.snap], ["Mid Point", ic.lineMid], ["Intersection", ic.cross], ["Quadrant", ic.quad], ["Point on Curve", ic.tang], ["Grid Point", ic.grid],
        ].map(([name, icon], i) => (
          <Btn key={name as string} name={name as string} on={i === 4 || i === 6} className="h-[21px] w-full">{icon}</Btn>
        ))}
      </div>
      <div className="mr-1 ml-[5px] h-11 w-px shrink-0 bg-[#dcdcdc]" />
      <Btn name="Fit" className="ml-1 w-6">{ic.fitView}</Btn>
      <div className="mb-2 grid shrink-0 grid-cols-[24px_24px_11px_24px_11px_24px]">
        <Btn name="Pan" className="h-[21px]">{ic.pan}</Btn>
        <Btn name="Layout" className="h-[21px]">{ic.layout}</Btn>
        <Btn name="Layout options"><Caret /></Btn>
        <Btn name="Shaded">{ic.shaded}</Btn>
        <Btn name="Shading options"><Caret /></Btn>
        <Btn name="Appearance">{ic.palette}</Btn>
        <Btn name="Rotate" className="h-[21px]">{ic.rotate}</Btn>
        <Btn name="Section">{ic.disc}</Btn>
        <Btn name="Section options"><Caret /></Btn>
        <Btn name="Clip">{ic.clip}</Btn>
        <Btn name="Clip options"><Caret /></Btn>
        <Btn name="Show and Hide">{ic.squares}</Btn>
      </div>
      <div className="mx-1 h-11 w-px shrink-0 bg-[#dcdcdc]" />
      <Btn name="Open" className="w-6"><Folder /></Btn>
      <div className="mb-2 grid shrink-0 grid-cols-[24px_24px_78px]">
        <Btn name="Add group" className="h-[21px]"><Folder mark="M1 3h5M3.500 1v5" /></Btn>
        <Btn name="Delete group"><Folder mark="M1 1l5 5M6 1L1 6" /></Btn>
        <button type="button" className="h-[18px] pl-1 text-left text-[10px] leading-none whitespace-nowrap">Record Macro</button>
        <Btn name="Remove group" className="h-[21px]"><Folder mark="M1 3h5" /></Btn>
        <Btn name="Edit group">{ic.edit}</Btn>
        <span className="flex items-center pl-0.5"><Btn name="Expressions">{ic.xvar}</Btn></span>
      </div>
      <div className="h-11 w-px shrink-0 bg-[#dcdcdc]" />
      <div className="mt-auto ml-auto pr-1 pb-1"><Caret /></div>
    </section>
  );
}

function ResourceBar() {
  return (
    <aside className="flex w-[30px] shrink-0 flex-col border-r border-[#a5a5a5] bg-[#dcdcdc]">
      <Btn name="Resource options" className="mb-3.5 h-[26px]"><Gear color="#3a3a3a" s={15} /></Btn>
      <Btn name="Assembly Navigator" className="h-10 pl-1">{ic.tree}</Btn>
      <Btn name="Constraint Navigator" className="h-[38px] pl-1">{ic.flip}</Btn>
      <Btn name="Part Navigator" className="ml-0.5 h-[42px] border border-r-0 border-[#a5a5a5] bg-white">{ic.nav}</Btn>
      <Btn name="Reuse Library" className="h-9 pl-1">{ic.books}</Btn>
      <Btn name="View Manager" className="mb-3 h-10 pl-1">{ic.eye}</Btn>
      <Btn name="Web Browser" className="mb-2.5 h-10 pl-1">{ic.info}</Btn>
      <Btn name="Internet" className="mb-2.5 h-10 pl-1">{ic.web}</Btn>
      <Btn name="History" className="h-10 pl-1">{ic.clock}</Btn>
      <Btn name="Curves" className="h-[18px]">{ic.wave}</Btn>
      {[["Scroll top", "M5 11h6l-3-4zM5 5h6v1H5z", "#aaa"], ["Scroll up", "M5 10h6L8 6z", "#999"], ["Scroll down", "M4 6h8l-4 5z", "#222"], ["Scroll end", "M4 8h8l-4 5zM4 5h8v1H4z", "#222"]].map(([n, d, f]) => (
        <Btn key={n} name={n} className="h-3.5"><Svg s={13}><path d={d} fill={f} /></Svg></Btn>
      ))}
    </aside>
  );
}

function NavigatorPanel() {
  return (
    <aside className="flex w-[219px] shrink-0 flex-col border-r border-[#a5a5a5] bg-white pr-[9px] pb-[5px] pl-1.5">
      <div className="flex flex-1 flex-col justify-end border-x border-[#dedede]">
        {[0, 1, 2, 3].map((i) => (
          <div key={i} className="h-[19px] border-t border-[#e4e4e4] even:bg-white odd:bg-[#f8f8f8]" />
        ))}
        <div className="h-2 border-t border-[#e4e4e4] bg-[#f8f8f8]" />
        <div className="flex h-4 items-center bg-[#f0f0f0] px-[3px]">
          <Svg s={11}><path d="M11 3L5 8l6 5" stroke="#333" strokeWidth="2.200" /></Svg>
          <div className="ml-0.5 h-3.5 w-20 bg-[#c9c9c9]" />
          <span className="ml-auto"><Svg s={11}><path d="M5 3l6 5-6 5" stroke="#333" strokeWidth="2.200" /></Svg></span>
        </div>
      </div>
      <div className="h-[5px] border-t border-[#a0a0a0] bg-[#d4d4d4]" />
      {["Dependencies", "Details", "Preview"].map((name) => (
        <button key={name} type="button" className="flex h-[23px] items-center justify-between border-b border-[#b9b9b9] pr-1 pl-1.5 text-[13px] text-[#2f7290]">
          {name}
          <Chevron down />
        </button>
      ))}
    </aside>
  );
}

function Scene() {
  const letters: [string, number][] = [["T", 729], ["e", 834], ["x", 954], ["t", 1040]];
  return (
    <div className="relative min-w-0 flex-1 overflow-hidden bg-linear-to-b from-[#b0b1b3] via-[#d2d4d7] to-[#e4e5ed]">
      <svg viewBox="281 180 954 467" preserveAspectRatio="xMidYMin slice" fill="none" className="absolute inset-0 h-full w-full" role="img" aria-label="Model view">
        <defs>
          <linearGradient id="skin" gradientUnits="userSpaceOnUse" x1="640" y1="300" x2="980" y2="378">
            <stop offset="0" stopColor="#b44a4e" />
            <stop offset=".12" stopColor="#bd4e50" />
            <stop offset=".34" stopColor="#dc5c5b" />
            <stop offset=".62" stopColor="#dd5c5b" />
            <stop offset=".84" stopColor="#c25053" />
            <stop offset="1" stopColor="#ae484c" />
          </linearGradient>
        </defs>
        <path d="M670 178L614 415l345 80 61-264L790 178z" fill="#dcbfcc" fillOpacity=".85" stroke="#cc5f92" strokeWidth="1.500" />
        <path d="M668 178l-50 229 330 73 57-248L760 178z" fill="url(#skin)" />
        <path d="M668 178l-50 229" stroke="#e8607c" strokeWidth="3" />
        <path d="M618 407l330 73 57-248L760 178" stroke="#dc4a45" strokeWidth="2" />
        <path d="M613 180l-49 216 459 105 56-247-120-27" stroke="#3d5fbd" strokeWidth="1.600" strokeLinejoin="round" />
        <g transform="rotate(12.9)" stroke="#4b5fc4" strokeWidth="1.600" fontFamily="Liberation Sans, Arial, sans-serif" fontSize="238" textAnchor="middle">
          {letters.map(([c, x]) => (
            <text key={c} x={x} y="221">{c}</text>
          ))}
        </g>
        <g stroke="#e3c6c0" strokeWidth="1.500">
          <path d="M743 432l8-38 39 9-7 39-63-16" />
          <path d="M783 442l12-64" strokeWidth="2.500" />
          <path d="M708 423.500l12 1-1 4zM797 367l-5 11 6 1z" fill="#e9e4d8" />
          <circle cx="783" cy="442" r="2.500" fill="#e3c6c0" />
        </g>
        <g fontFamily="Liberation Sans, Arial, sans-serif" fontSize="13" fill="#ebc9c6">
          <text x="694" y="427">X</text>
          <text x="795" y="364">Z</text>
        </g>
        <circle cx="700" cy="314" r="10" stroke="#f4dfd8" strokeWidth="1.500" strokeDasharray="10 5.700" strokeDashoffset="-3" />
        <path d="M700 300v28M686 313h28" stroke="#1c1c1c" strokeWidth="3.500" />
        <path d="M700 301v26M687 313h26" stroke="#fff" strokeWidth="1.300" />
        <path d="M706 301.500h7.500v8M704 305l4-1 2 1v4" stroke="#1c1c1c" strokeWidth="3" />
        <path d="M706 301.500h7.500v7M705 305h4.500v4" stroke="#f7e6e0" strokeWidth="1.400" />
        <path d="M311 581l17 4-5 19-16-5z" fill="#d3d4d6" stroke="#9a9ca0" strokeWidth="1.300" />
        <path d="M326 601v-20" stroke="#2447c8" strokeWidth="1.500" />
        <path d="M328 574l-3 9h5z" fill="#2447c8" />
        <path d="M307 599l-12-3 8-1.500 5 2.500z" fill="#c32a2a" stroke="#c32a2a" />
        <path d="M322 601h6l-4 5z" fill="#3f8f4a" />
        <g fontFamily="Liberation Sans, Arial, sans-serif" fontSize="12">
          <text x="286" y="600" fill="#c64a4a">X</text>
          <text x="326" y="575" fill="#3b62cf">Z</text>
        </g>
      </svg>
    </div>
  );
}

function SideTools() {
  const stack: [string, ReactNode][] = [
    ["Layer Settings", ic.layerA], ["Visible in View", ic.layerB], ["Move to Layer", ic.layerC], ["Copy to Layer", ic.layerD],
    ["Hide", <Diamonds key="a" />], ["Show", <Diamonds key="b" flip />], ["Show All", <Diamonds key="c" gold />], ["Invert", <Diamonds key="d" both />],
  ];
  return (
    <aside className="flex w-[39px] shrink-0 flex-col overflow-hidden bg-white pt-1.5">
      {stack.map(([name, icon]) => (
        <Btn key={name} name={name} className="ml-[7px] h-[31px]">{icon}</Btn>
      ))}
      <div className="grid w-[44px] grid-cols-2 border-b border-[#d0d0d0] pb-1">
        {sideGrid.map((t) => (
          <Btn key={t.name} name={t.name} on={t.on} className="h-[23px]">{t.icon}</Btn>
        ))}
      </div>
      <span className="mt-auto mb-1 ml-1.5"><Svg s={8}><path d="M10 2v12L3 8z" fill="#222" /></Svg></span>
    </aside>
  );
}

const Star = () => (
  <Svg s={12}>
    <path d="M8 1v14M2 4l12 8M14 4L2 12" stroke="#d92020" strokeWidth="2.600" />
  </Svg>
);

const Section = ({ title, className, closed, children }: { title: string; className: string; closed?: boolean; children?: ReactNode }) => (
  <section className={`border-b border-[#cfcfcf] bg-white ${className}`}>
    <button type="button" className={`flex w-full items-center justify-between pr-[5px] pl-[7px] text-[13px] text-[#2f7290] ${closed ? "h-full" : "h-6"}`}>
      {title}
      <Chevron down={closed} />
    </button>
    {children && <div className="flex flex-col gap-0.5 px-[9px] pt-1">{children}</div>}
  </section>
);

const Prompt = ({ text, on }: { text: string; on?: boolean }) => (
  <span className={`flex h-full flex-1 items-center gap-1 pl-[2px] ${on ? "bg-[#fedd78]" : ""}`}>
    <Star />
    {text}
  </span>
);

function WrapDialog() {
  return (
    <div role="dialog" aria-label="Wrap/Unwrap Curve" className="absolute top-0 left-[34px] w-[283px] bg-[#ededed] text-[11px] text-[#333] shadow-sm">
      <div className="flex h-6 items-center bg-[#519fb7] pr-1.5 pl-1.5 text-[12px] text-white">
        <Gear color="#fff" s={15} />
        <span className="ml-2 flex-1">Wrap/Unwrap Curve</span>
        <Btn name="Reset" className="mr-1 w-4">
          <Svg s={14}><path d="M4 3.500A5.500 5.500 0 1 0 12 4" stroke="#fff" strokeWidth="2" /><path d="M1 2h6v5.500z" fill="#fff" /></Svg>
        </Btn>
        <Btn name="Close dialog" className="w-4"><Close color="#fff" s={14} /></Btn>
      </div>
      <div className="flex flex-col gap-1 px-[5px] pt-0.5">
        <Section title="Type" className="h-[57px]">
          <div className="flex h-[22px] items-center border border-[#a9a9a9] bg-white p-0.5">
            <select aria-label="Type" className="h-full min-w-0 flex-1 appearance-none border border-dotted border-[#555] bg-[#abd5df] text-[11px] leading-[14px]">
              <option>Unwrap</option>
            </select>
            <span className="pr-[3px] pl-[5px]"><Caret /></span>
          </div>
        </Section>
        <Section title="Curve or point" className="h-[66px]">
          <div className="flex h-[30px] items-center gap-0.5">
            <Prompt text="Select Curve or Point (0)" on />
            <Btn name="Point Constructor" className="h-[22px] w-[22px] border border-[#a9a9a9]">
              <Svg><path d="M9 2v7M5.500 5.500h7" stroke="#555" /><path d="M2 8v5h5M5 11l2 2-2 2" stroke="#d9702e" strokeWidth="1.400" /><path d="M8 13h2v1.500H8zM11 13h2v1.500h-2zM14 13h2v1.500h-2z" fill="#222" /></Svg>
            </Btn>
            <Btn name="Curve" className="h-[30px] w-[30px] bg-[#fedd78]">
              <Svg s={24}><path d="M2 14q5 1 6-6t6-6" stroke="#c04a1c" strokeWidth="1.400" /></Svg>
            </Btn>
          </div>
        </Section>
        <Section title="Face" className="h-[65px]">
          <div className="flex h-[30px] items-center">
            <Prompt text="Select Face (0)" />
            <Btn name="Face" className="h-[30px] w-[30px] bg-[#68aec3]"><Cube s={24} t="#fffaf0" l="#f6ab35" r="#e9e4e4" /></Btn>
          </div>
        </Section>
        <Section title="Plane" className="h-[97px]">
          <div className="flex h-[30px] items-center">
            <Prompt text="Select Object (0)" />
            <Btn name="Object" className="h-[30px] w-[30px] border border-[#b3b3b3]">
              <Svg s={20}><circle cx="8" cy="8" r="4.500" stroke="#555" strokeWidth="1.200" /><path d="M8 1v14M1 8h14" stroke="#c22a2a" /></Svg>
            </Btn>
          </div>
          <div className="flex h-[30px] items-center">
            <Prompt text="Specify Plane" />
            <Btn name="Plane Dialog" className="mr-0.5 h-[22px] w-[22px] border border-[#a9a9a9]">
              <Svg><path d="M6 2l8 1v9l-8-2z" stroke="#445" strokeWidth="1.200" /><path d="M1 8v5h6M5 11l2 2-2 2" stroke="#d9702e" strokeWidth="1.400" /><path d="M8 14h2v1.500H8zM11 14h2v1.500h-2z" fill="#222" /></Svg>
            </Btn>
            <Btn name="Inferred plane" className="h-[30px] w-[30px] border border-[#b3b3b3]">
              <Svg s={24}><path d="M2 2.500l9 1v11l-9-2z" stroke="#445" /><path d="M14 1l-5 1-2 4h3l-3 4 6-4h-2z" fill="#d9d34e" stroke="#7c7a2c" strokeWidth=".6" /></Svg>
            </Btn>
            <Btn name="Plane options" className="h-[30px] w-4 border border-l-0 border-[#b3b3b3]"><Caret /></Btn>
          </div>
        </Section>
        <Section title="Settings" className="h-[22px]" closed />
        <Section title="Preview" className="h-[65px]">
          <div className="flex h-[30px] items-center justify-between">
            <label className="flex items-center gap-[5px]">
              <span className="relative flex h-3 w-3">
                <input type="checkbox" defaultChecked className="h-3 w-3 appearance-none border border-[#444] bg-white" />
                <svg viewBox="0 0 12 12" width="12" height="12" fill="none" aria-hidden="true" className="pointer-events-none absolute inset-0">
                  <path d="M2.500 6l2.500 2.500L9.500 3" stroke="#222" strokeWidth="1.300" />
                </svg>
              </span>
              Preview
            </label>
            <span className="flex items-center gap-0.5">
              Show Result
              <Btn name="Show Result" className="h-[30px] w-[30px] border border-[#cfcfcf]">
                <Svg s={24}><path d="M9.500 10l4.500 4.500" stroke="#a5a5a5" strokeWidth="2.400" /><circle cx="6.500" cy="6.500" r="5" fill="#c4c4c4" stroke="#a2a2a2" /></Svg>
              </Btn>
            </span>
          </div>
        </Section>
      </div>
      <div className="flex h-[43px] items-center justify-end gap-[5px] pr-3.5">
        <button type="button" disabled className="h-[22px] w-[62px] border border-[#b3b3b3] text-[#a8a8a8]">OK</button>
        <button type="button" disabled className="h-[22px] w-[62px] border border-[#b3b3b3] text-[#a8a8a8]">Apply</button>
        <button type="button" className="h-[22px] w-[62px] border border-[#a9a9a9] bg-[#dcdcdc]">Cancel</button>
      </div>
    </div>
  );
}

const taskIcons: { name: string; icon: ReactNode; open?: boolean; active?: boolean }[] = [
  { name: "Start", icon: <Svg><path d="M0 2.500l6.500-1v6H0zM7.500 1.300L16 0v7.500H7.500zM0 8.500h6.500v6l-6.500-1zM7.500 8.500H16V16l-8.500-1.300z" fill="#fff" /></Svg> },
  { name: "Cortana", icon: <Svg><circle cx="8" cy="8" r="5.800" stroke="#fff" strokeWidth="2.200" /></Svg> },
  { name: "Task View", icon: <Svg s={19}><path d="M4 3h8v10H4zM2.500 4H.8v8h1.700M13.500 4h1.700v8h-1.700" stroke="#fff" strokeWidth="1.100" /></Svg> },
  { name: "File Explorer", open: true, icon: <Svg><path d="M0 2h6l1 2h8v10H0z" fill="#f6d774" /><path d="M2 15V9h12v6h-3v-3H5v3z" fill="#4ba3dd" /></Svg> },
  { name: "Store", icon: <Svg><path d="M2 5l12-1v10L2 15z" stroke="#fff" fill="#fff" /><path d="M5 4q0-3 3-3t3 3" stroke="#fff" /><path d="M5 7.500h2.500v2.200H5zM8.500 7H11v2.700H8.500zM5 10.500h2.500v2.200H5zM8.500 10.500H11v2.700H8.500z" fill="#111" /></Svg> },
  { name: "Keyboard", icon: <Svg><path d="M0 3h16v10H0z" fill="#8cc4ea" /><path d="M1 5.500h14M1 8h14M3 10.500h10" stroke="#2b6596" strokeDasharray="1.300 .8" /></Svg> },
  { name: "Snipping Tool", open: true, icon: <Svg><circle cx="6.500" cy="5.500" r="5.500" fill="#dccac4" /><path d="M4 3l6 5M6 1v9" stroke="#9d4c42" /><path d="M8 9l2 6M12 9l-1 6M14 10v4" stroke="#4d86b4" strokeWidth="1.500" /></Svg> },
  { name: "Edge", icon: <Svg><path d="M1 7q1-6 7.500-6T15 9H5q0 4 5 4 2.500 0 4-1v3q-2 1-5 1-7-.5-6-7 .8-3 4-4-2 1.500-2 2.500h5.500Q10.500 4 7.500 4 3 4 1 7z" fill="#2884dc" /></Svg> },
  { name: "Firefox", open: true, icon: <Svg><circle cx="8" cy="8" r="7" fill="#e8782a" /><circle cx="9" cy="7" r="4.500" fill="#315fa5" /><path d="M1 6q4-1 5 3t6 2q-3 4-8 2t-3-7z" fill="#f09a2c" /></Svg> },
  { name: "Chrome", open: true, icon: <Svg><circle cx="8" cy="8" r="7" fill="#3f9c46" /><path d="M1.500 5A7 7 0 0 1 14.500 5L8 5z" fill="#dc3f34" /><path d="M14.600 5A7 7 0 0 1 8 15l3.500-6L9 5z" fill="#f6cb3a" /><circle cx="8" cy="8" r="3.200" fill="#4a8af0" stroke="#fff" /></Svg> },
  { name: "Visio", open: true, icon: <Svg><path d="M8 2h8v12H8z" fill="#dde5f4" /><path d="M10 4h4v3h-4zM12 9l2 2-2 2-2-2z" fill="#3c58a6" /><path d="M0 2l9-1.500v15L0 14z" fill="#3c58a6" /><text x="1" y="12" fontSize="10" fontWeight="700" fill="#fff" fontFamily="Open Sans, sans-serif">V</text></Svg> },
  { name: "Word", open: true, icon: <Svg><path d="M8 2h8v12H8z" fill="#fff" /><path d="M10 5h5M10 7h5M10 9h5M10 11h5" stroke="#2b579a" /><path d="M0 2l9-1.500v15L0 14z" fill="#2b579a" /><text x=".3" y="11" fontSize="8" fontWeight="700" fill="#fff" fontFamily="Open Sans, sans-serif">W</text></Svg> },
  { name: "NX", open: true, active: true, icon: <Svg><path d="M3 1l6 4-2 6-5-4z" fill="#d8324c" /><path d="M2 12q8 4 12-4l-4-2q-1 6-6 4z" fill="#b9ccd2" /><path d="M8 1l2 5-3 1z" fill="#4fc0c6" /></Svg> },
  { name: "PowerPoint", open: true, icon: <Svg><path d="M8 2h8v12H8z" fill="#f6ded6" /><path d="M10 5h4v2h-4zM10 9h5M10 11h5" stroke="#d04423" /><path d="M0 2l9-1.500v15L0 14z" fill="#d04423" /><text x="1.500" y="12" fontSize="10" fontWeight="700" fill="#fff" fontFamily="Open Sans, sans-serif">P</text></Svg> },
];

function Footer() {
  return (
    <footer className="text-[10px]">
      <div className="flex h-6 items-center border-b border-[#b5b5b5] bg-white pl-2.5 text-[#333]">
        <button type="button" className="flex w-[95px] items-center gap-0.5 whitespace-nowrap">{ic.promote}Promote Body</button>
        <button type="button" className="flex w-[114px] items-center gap-1 whitespace-nowrap"><Tabletool tall />Fastener Assembly</button>
        <button type="button" className="flex w-[106px] items-center gap-1 whitespace-nowrap"><Tabletool />Reusable Pocket</button>
        <button type="button" className="w-[133px] text-left whitespace-nowrap">Assembly Representations</button>
        <button type="button" className="w-[82px] text-left whitespace-nowrap">Assembly Zones</button>
        <div className="h-4 w-px bg-[#d5d5d5]" />
        <div className="mt-1 mr-1 ml-auto"><Caret /></div>
      </div>
      <div className="flex h-[25px] items-center bg-white pr-[51px] pb-1 pl-[3px] font-semibold text-[#222]">
        <span className="w-[587px] shrink-0">Select curves to unwrap</span>
        <span className="flex-1">Face Edges : Face of Extrude(1)</span>
        <span className="flex gap-1">
          <Svg><rect x=".5" y=".5" width="15" height="15" fill="#d8d8d8" stroke="#999" /><path d="M3 12l2-7 2 7 3-8 2 7 2-6" stroke="#888" /></Svg>
          <Svg><path d="M1 4V1h3M12 1h3v3M15 12v3h-3M4 15H1v-3" stroke="#a98f60" strokeWidth="1.300" /><rect x="4" y="4" width="8" height="8" fill="#8fa9d6" stroke="#39517c" /><path d="M6 8h4" stroke="#fff" strokeWidth="2" /></Svg>
        </span>
      </div>
      <div className="flex h-6 items-stretch bg-[#0d0d0f] text-white">
        <div className="grid w-[486px] grid-cols-14">
          {taskIcons.map((t) => (
            <button key={t.name} type="button" aria-label={t.name} className={`flex flex-col items-center ${t.active ? "bg-[#47484b]" : ""}`}>
              <span className="flex flex-1 items-center">{t.icon}</span>
              <span className={`h-0.5 ${t.active ? "w-full" : "w-[26px]"} ${t.open ? "bg-[#8aa9cf]" : ""}`} />
            </button>
          ))}
        </div>
        <div className="ml-auto flex items-center pr-[22px] pb-1 text-[11px]">
          <Btn name="Hidden icons" className="w-5"><Svg s={13}><path d="M2 11l6-6 6 6" stroke="#eee" strokeWidth="1.500" /></Svg></Btn>
          <Btn name="Battery" className="w-6"><Svg><path d="M5 5h10v7H5z" fill="#ddd" stroke="#fff" /><path d="M1 2v3h4V2M3 5v6M2 1v2M4 1v2" stroke="#fff" /></Svg></Btn>
          <Btn name="Network" className="mr-1.5 w-6"><Svg s={14}><path d="M2 14Q3 4 14 2M5 14q1-7 9-8.500M8 14q1-4 6-5" stroke="#ddd" strokeWidth="1.400" /><path d="M11 14q0-2 3-2v2z" fill="#fff" /></Svg></Btn>
          <button type="button" className="mr-3.5">ENG</button>
          <button type="button" className="mr-5">1:53 PM</button>
          <Btn name="Notifications"><Svg s={17}><path d="M1 1h14v11h-5l-2.500 3L5.500 12H1z" fill="#fff" /><path d="M3.500 4.500h9M3.500 7h9M3.500 9.500h6" stroke="#222" /></Svg></Btn>
        </div>
      </div>
    </footer>
  );
}

export default function App() {
  return (
    <div className="relative flex min-h-screen flex-col overflow-hidden bg-white font-['Open_Sans','Noto_Sans',sans-serif] text-[#2d2d2d]">
      <TitleBar />
      <TabBar />
      <Ribbon />
      <SelectionBar />
      <main className="flex min-h-0 flex-1">
        <ResourceBar />
        <NavigatorPanel />
        <div className="flex w-8 shrink-0 flex-col justify-end bg-white pb-1 pl-1.5">
          <Svg s={8}><path d="M10 2v12L3 8z" fill="#222" /></Svg>
        </div>
        <Scene />
        <SideTools />
        <div className="w-1.5 shrink-0 bg-linear-to-b from-[#b0b1b3] to-[#e4e5ed]" />
      </main>
      <Footer />
      <WrapDialog />
    </div>
  );
}
